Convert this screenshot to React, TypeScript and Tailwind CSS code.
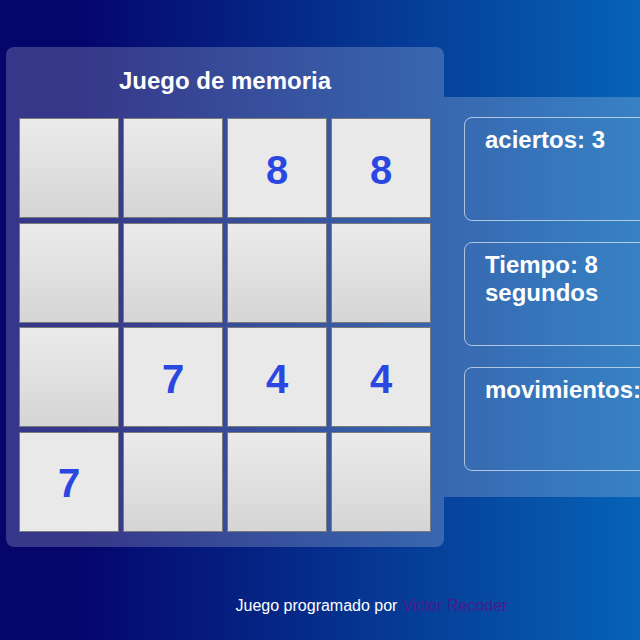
import React from "react";

const CELLS: (number | null)[] = [
  null, null, 8, 8,
  null, null, null, null,
  null, 7, 4, 4,
  7, null, null, null,
];

const font = { fontFamily: '"Liberation Sans", Arial, sans-serif' };

export default function App() {
  return (
    <div
      className="min-h-screen w-full bg-[linear-gradient(90deg,#05056c_12%,#0663b6_100%)] text-white"
      style={font}
    >
      <div className="w-[740px] pt-[47px] pl-[6px]">
        <div className="flex items-center">
          {/* Board */}
          <div className="w-[438px] h-[500px] rounded-lg bg-white/20 px-[13px] pt-[19px] pb-[15px] flex flex-col">
            <h1 className="text-center text-[24px] font-bold leading-[30px] mb-[22px]">Juego de memoria</h1>
            <div className="grid grid-cols-4 gap-x-[4px] gap-y-[4.67px]">
              {CELLS.map((n, i) => (
                <div
                  key={i}
                  className={`h-[100px] border border-[#7a7a7a] flex items-center justify-center pt-[3px] text-[40px] font-bold text-[#2a47e2] ${
                    n === null ? "bg-[linear-gradient(180deg,#ebebeb,#d5d5d5)]" : "bg-[#e9e9e9]"
                  }`}
                >
                  {n}
                </div>
              ))}
            </div>
          </div>

          {/* Stats */}
          <div className="w-[296px] h-[400px] bg-white/20 pl-[20px] pt-[20px] flex flex-col gap-[21px]">
            {["aciertos: 3", "Tiempo: 8 segundos", "movimientos: 8"].map(t => (
              <div key={t} className="w-[250px] h-[104px] rounded-lg border border-white/60 px-[20px] pt-[8px] text-[24px] font-bold leading-[28px]">
                {t}
              </div>
            ))}
          </div>
        </div>

        <p className="mt-[50px] text-center text-[16px] leading-[18px] pr-[3px]">
          Juego programado por <span className="text-[#4a1a8c]">Victor Recoder</span>
        </p>
      </div>
    </div>
  );
}
